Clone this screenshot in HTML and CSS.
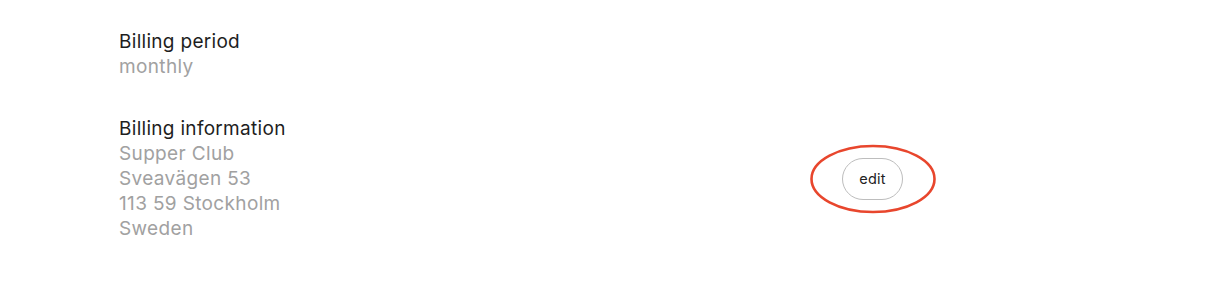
FILE: index.html
```html
<!DOCTYPE html>
<html lang="en">
<head>
<meta charset="utf-8">
<title>Billing</title>
<link rel="stylesheet" href="styles.css">
</head>
<body>
  <main class="page">
    <section class="row">
      <div class="info">
        <div class="label">Billing period</div>
        <div class="value">monthly</div>
      </div>
    </section>
    <section class="row">
      <div class="info">
        <div class="label">Billing information</div>
        <div class="value">Supper Club</div>
        <div class="value">Sveavägen 53</div>
        <div class="value">113 59 Stockholm</div>
        <div class="value">Sweden</div>
      </div>
      <div class="action">
        <button class="edit" type="button">edit</button>
        <svg class="circle" width="128" height="72" viewBox="0 0 128 72" aria-hidden="true">
          <ellipse cx="64" cy="36" rx="61.5" ry="33" fill="none" stroke="#e8462d" stroke-width="2.6"/>
        </svg>
      </div>
    </section>
  </main>
</body>
</html>
```

FILE: styles.css
```css
html, body {
  margin: 0;
  padding: 0;
  background: #ffffff;
}

body {
  font-family: Inter, "Noto Sans", "Liberation Sans", sans-serif;
  color: #1f1f1f;
}

.page {
  padding: 29px 0 0 119px;
  display: flex;
  flex-direction: column;
  gap: 37px;
}

.row {
  display: grid;
  grid-template-columns: 723px auto;
  align-items: center;
}

.info {
  display: flex;
  flex-direction: column;
}

.label {
  font-size: 19px;
  line-height: 25px;
  color: #1e1e1e;
  letter-spacing: 0.3px;
}

.value {
  font-size: 19px;
  line-height: 25px;
  color: #a1a1a1;
  letter-spacing: 0.35px;
}

.action {
  position: relative;
  justify-self: start;
}

.edit {
  display: block;
  height: 42px;
  padding: 0 16px;
  min-width: 61px;
  border: 1px solid #bdbdbd;
  border-radius: 21px;
  background: #ffffff;
  font-family: Inter, "Noto Sans", "Liberation Sans", sans-serif;
  font-size: 14.5px;
  letter-spacing: 0.2px;
  color: #222222;
  cursor: pointer;
}

.circle {
  position: absolute;
  left: -33px;
  top: -15px;
  pointer-events: none;
}
```
